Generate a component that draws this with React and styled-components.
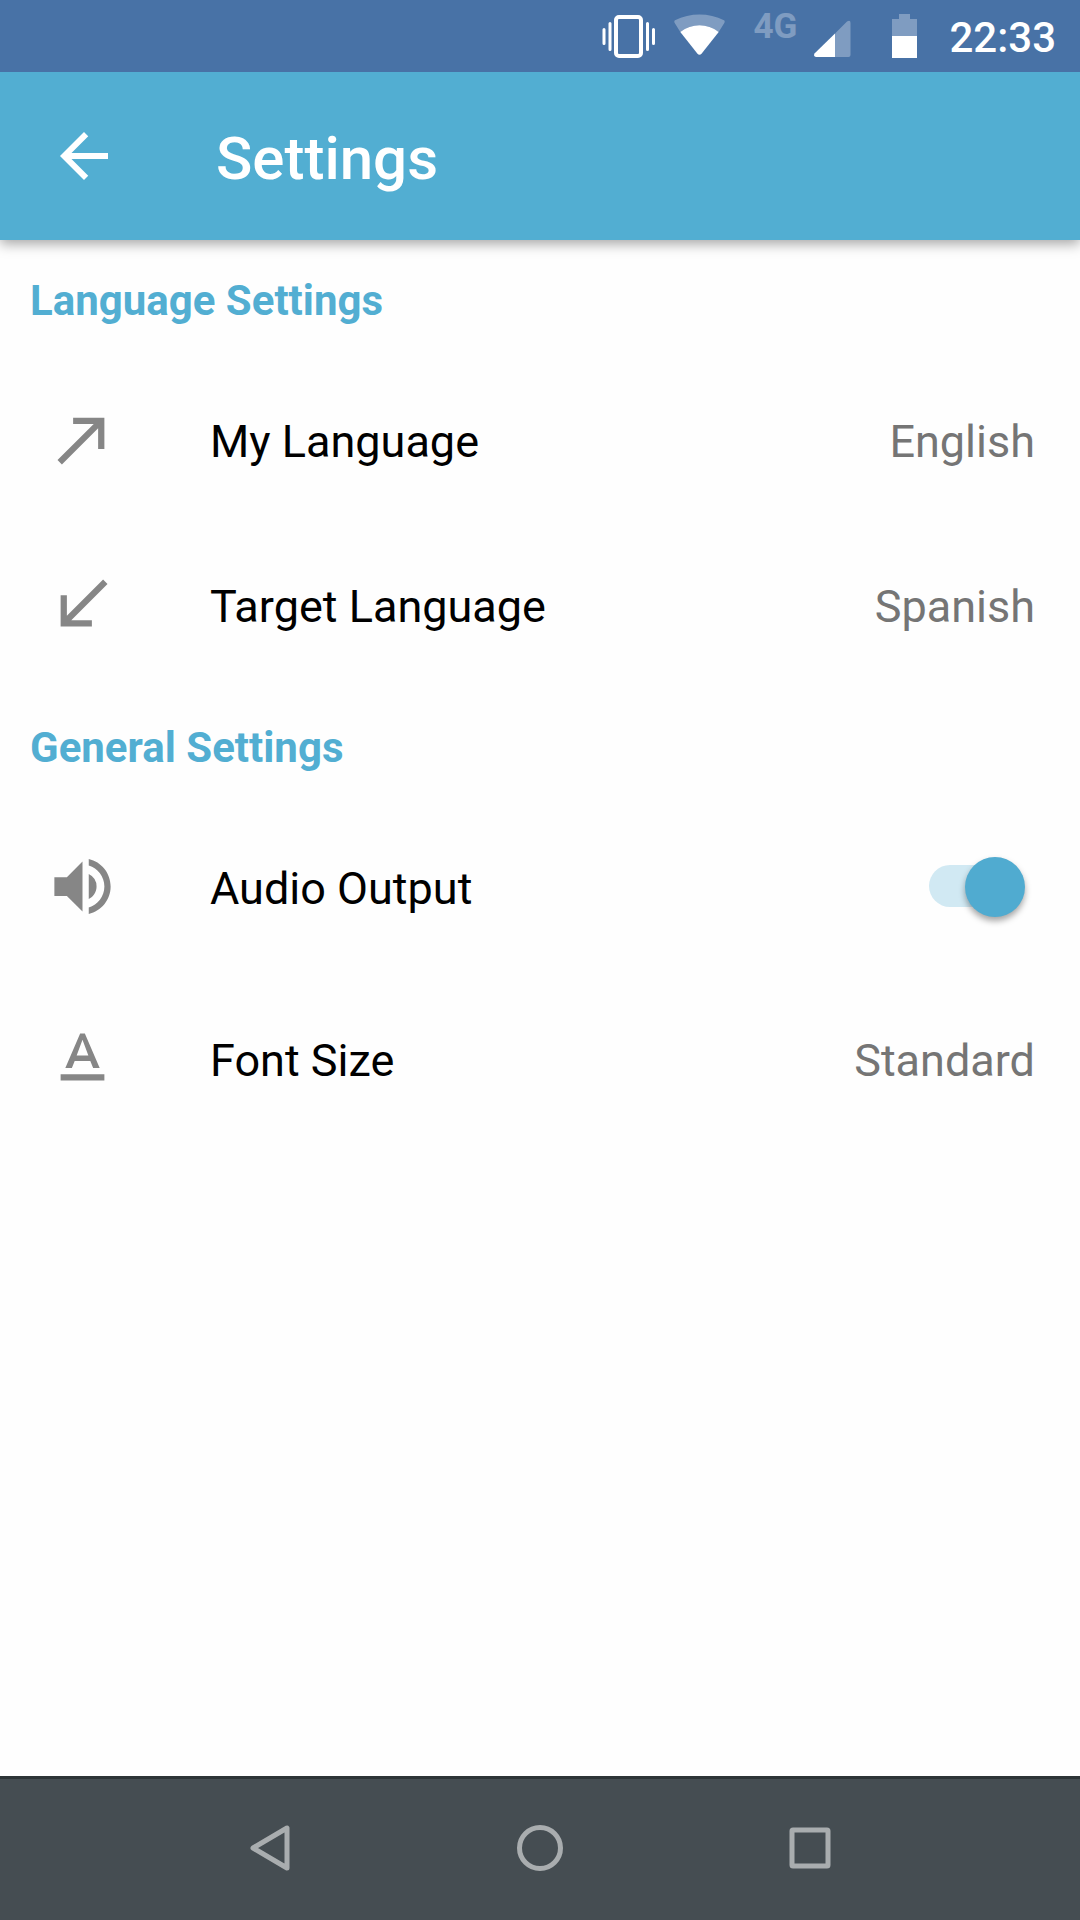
import React, { useState } from 'react'
import styled, { createGlobalStyle } from 'styled-components'
import { MdArrowBack, MdCallMade, MdCallReceived, MdTextFormat, MdVolumeUp } from 'react-icons/md'

const primaryColor = '#52aed2'
const statusColor = '#4872a6'
const iconGray = '#868686'
const textGray = '#757575'
const navColor = '#454d52'

const GlobalStyle = createGlobalStyle`
    *, *::before, *::after {
        box-sizing: border-box;
    }
    body {
        margin: 0;
        background: #fefefe;
        font-family: Roboto, sans-serif;
    }
    button {
        border: 0;
        padding: 0;
        background: none;
        font: inherit;
        color: inherit;
        cursor: pointer;
    }
    svg {
        display: block;
        flex: none;
    }
`

const Screen = styled.div`
    display: flex;
    flex-direction: column;
    min-height: 100vh;
`

const StatusBar = styled.div`
    display: flex;
    align-items: center;
    justify-content: flex-end;
    gap: 16px;
    height: 72px;
    padding-right: 24px;
    background: ${statusColor};
    color: white;
`

const NetworkType = styled.span`
    align-self: flex-start;
    padding-top: 6px;
    font-size: 35px;
    line-height: 42px;
    font-weight: 700;
    opacity: 0.3;
`

const Clock = styled.time`
    padding-top: 4px;
    font-size: 42px;
    line-height: 48px;
    font-weight: 500;
`

const AppBar = styled.header`
    display: flex;
    align-items: center;
    gap: 96px;
    height: 168px;
    padding: 0 48px;
    background: ${primaryColor};
    color: white;
    box-shadow: 0 4px 12px rgba(0, 0, 0, 0.35);
    clip-path: inset(0 0 -24px 0);
`

const Title = styled.h1`
    margin: 0;
    padding-top: 6px;
    font-size: 60px;
    line-height: 72px;
    font-weight: 500;
`

const Content = styled.main`
    flex: 1;
`

const SectionTitle = styled.h2`
    margin: 0;
    padding: 0 30px;
    font-size: 42px;
    line-height: 122px;
    font-weight: 700;
    color: ${primaryColor};
`

const Rows = styled.div`
    display: flex;
    flex-direction: column;
    gap: 5px;
`

const Row = styled.button`
    display: flex;
    align-items: flex-start;
    width: 100%;
    padding: 40px 45px;
    font-size: 45px;
    line-height: 80px;
    text-align: left;
    cursor: pointer;
    > svg {
        margin-right: 90px;
        color: ${iconGray};
    }
`

const RowLabel = styled.span`
    flex: 1;
    color: black;
`

const RowValue = styled.span`
    color: ${textGray};
`

const Switch = styled.input`
    appearance: none;
    position: relative;
    width: 96px;
    height: 75px;
    margin: 0 10px 12px 0;
    cursor: pointer;
    &::before {
        content: '';
        position: absolute;
        top: 16px;
        left: 0;
        width: 84px;
        height: 42px;
        border-radius: 21px;
        background: ${props => (props.checked ? '#d1e9f3' : '#cccccc')};
    }
    &::after {
        content: '';
        position: absolute;
        top: 8px;
        left: ${props => (props.checked ? '36px' : '0')};
        width: 60px;
        height: 60px;
        border-radius: 50%;
        background: ${props => (props.checked ? '#50abd0' : '#f1f1f1')};
        box-shadow: 0 4px 6px rgba(0, 0, 0, 0.35);
    }
`

const NavBar = styled.nav`
    display: flex;
    height: 144px;
    padding: 0 12.5%;
    background: ${navColor};
    box-shadow: inset 0 3px #2d3437;
`

const NavButton = styled.button`
    display: flex;
    flex: 1;
    align-items: center;
    justify-content: center;
    color: #a9adaf;
`

const VibrateIcon = () => (
    <svg width="56" height="48" viewBox="0 0 56 48" fill="none" stroke="currentColor" aria-hidden="true">
        <rect x="14" y="5" width="25" height="39" rx="3" strokeWidth="4" />
        <path d="M2 17.5v14M8 11.5v26M45.5 11.5v26M51.5 17.5v14" strokeWidth="3" strokeLinecap="round" />
    </svg>
)

const WifiIcon = () => (
    <svg width="63" height="48" viewBox="0 0 63 48" fill="currentColor" aria-hidden="true">
        <path opacity="0.3" d="M.7 11C.1 10 .1 9 1 8.300C8.500 4.500 17 2.500 25.500 2.500S42.500 4.500 50 8.300C50.900 9 50.900 10 50.300 11L44.700 20C39 15.500 32.500 13.200 25.500 13.200S12 15.500 6.300 20Z" />
        <path d="M6.300 20C12 15.500 18.500 13.200 25.500 13.200S39 15.500 44.700 20L27.700 41.600Q25.500 44 23.300 41.600Z" />
    </svg>
)

const SignalIcon = () => (
    <svg width="60" height="48" viewBox="0 0 60 48" fill="currentColor" aria-hidden="true">
        <path opacity="0.3" d="M22 21.500L34 9.500Q37.500 7.500 37.500 11V43Q37.500 45 35.500 45H22Z" />
        <path d="M22 21.500V45H3Q0 44 1.500 41.500Z" />
    </svg>
)

const BatteryIcon = () => (
    <svg width="44" height="48" viewBox="0 0 44 48" fill="currentColor" aria-hidden="true">
        <path opacity="0.3" d="M10 2h11v5h7v17H3V7h7z" />
        <path d="M3 24h25v22H3z" />
    </svg>
)

const NavIcon = ({ children }) => (
    <svg
        width="72"
        height="72"
        viewBox="0 0 72 72"
        fill="none"
        stroke="currentColor"
        strokeWidth="5"
        strokeLinejoin="round"
        aria-hidden="true"
    >
        {children}
    </svg>
)

const SettingRow = ({ icon: Icon, label, value }) => (
    <Row type="button">
        <Icon size={75} />
        <RowLabel>{label}</RowLabel>
        <RowValue>{value}</RowValue>
    </Row>
)

const App = () => {
    const [audio, setAudio] = useState(true)

    return (
        <Screen>
            <GlobalStyle />
            <StatusBar>
                <VibrateIcon />
                <WifiIcon />
                <NetworkType>4G</NetworkType>
                <SignalIcon />
                <BatteryIcon />
                <Clock>22:33</Clock>
            </StatusBar>
            <AppBar>
                <button type="button" aria-label="Back">
                    <MdArrowBack size={72} />
                </button>
                <Title>Settings</Title>
            </AppBar>
            <Content>
                <SectionTitle>Language Settings</SectionTitle>
                <Rows>
                    <SettingRow icon={MdCallMade} label="My Language" value="English" />
                    <SettingRow icon={MdCallReceived} label="Target Language" value="Spanish" />
                </Rows>
                <SectionTitle>General Settings</SectionTitle>
                <Rows>
                    <Row as="label" htmlFor="audio-output">
                        <MdVolumeUp size={75} />
                        <RowLabel>Audio Output</RowLabel>
                        <Switch
                            id="audio-output"
                            type="checkbox"
                            checked={audio}
                            onChange={e => setAudio(e.target.checked)}
                        />
                    </Row>
                    <SettingRow icon={MdTextFormat} label="Font Size" value="Standard" />
                </Rows>
            </Content>
            <NavBar>
                <NavButton type="button" aria-label="Back">
                    <NavIcon>
                        <path d="M53 16v40L19 36z" />
                    </NavIcon>
                </NavButton>
                <NavButton type="button" aria-label="Home">
                    <NavIcon>
                        <circle cx="36" cy="36" r="20.5" />
                    </NavIcon>
                </NavButton>
                <NavButton type="button" aria-label="Overview">
                    <NavIcon>
                        <rect x="18" y="18" width="36" height="36" rx="1" />
                    </NavIcon>
                </NavButton>
            </NavBar>
        </Screen>
    )
}

export default App
